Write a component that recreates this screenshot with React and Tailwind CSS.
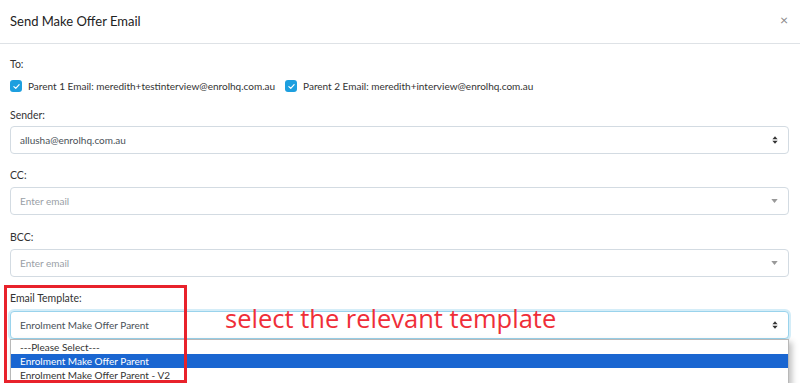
import React from 'react';

const font = "font-['Lato',sans-serif]";

const CheckIcon = () => (
  <span className="flex h-[12px] w-[12px] items-center justify-center rounded-[3px] bg-[#1d9fdf]">
    <svg viewBox="0 0 12 12" className="h-[9px] w-[9px]" fill="none">
      <path d="M2.5 6.2 L5 8.5 L9.5 3.5" stroke="#fff" strokeWidth="1.6" strokeLinecap="round" strokeLinejoin="round" />
    </svg>
  </span>
);

const UpDown = () => (
  <svg viewBox="0 0 8 12" className="h-[10px] w-[6px]" fill="#333">
    <path d="M4 1 L7.5 5 L0.5 5 Z" />
    <path d="M4 11 L7.5 7 L0.5 7 Z" />
  </svg>
);

const Caret = () => (
  <svg viewBox="0 0 8 5" className="h-[4px] w-[7px]" fill="#999">
    <path d="M0 0 L8 0 L4 5 Z" />
  </svg>
);

const Label = ({ children, className = '' }) => (
  <div className={`h-[12px] text-[10.5px] leading-[12px] text-[#333] ${className}`}>{children}</div>
);

const Field = ({ text, placeholder, icon, focused }) => (
  <div
    className={`flex h-[28px] items-center justify-between rounded-[4px] border bg-white pl-[9px] pr-[10px] text-[10px] ${
      focused ? 'border-[#9ad3ec] shadow-[0_0_0_2px_rgba(160,215,240,0.45)]' : 'border-[#d3dbe2]'
    }`}
  >
    <span className={placeholder ? 'text-[#9aa0a6]' : 'text-[#495057]'}>{text}</span>
    {icon}
  </div>
);

export default function App() {
  return (
    <div className={`relative h-[383px] w-[800px] overflow-hidden bg-white ${font}`}>
      {/* Header */}
      <div className="flex h-[44px] items-center justify-between border-b border-[#dee2e6] pl-[10px] pr-[12px]">
        <h1 className="text-[13px] font-normal text-[#222]">Send Make Offer Email</h1>
        <span className="mt-[-4px] text-[14px] leading-none text-[#888]">×</span>
      </div>

      {/* Body */}
      <div className="px-[10px] pr-[11px]">
        <Label className="mt-[14px]">To:</Label>
        <div className="mt-[10px] flex h-[12px] items-center gap-[10px] text-[10px] text-[#333]">
          <label className="flex items-center gap-[6px]">
            <CheckIcon />
            <span>Parent 1 Email: meredith+testinterview@enrolhq.com.au</span>
          </label>
          <label className="flex items-center gap-[6px]">
            <CheckIcon />
            <span>Parent 2 Email: meredith+interview@enrolhq.com.au</span>
          </label>
        </div>

        <Label className="mt-[17px]">Sender:</Label>
        <div className="mt-[5px]">
          <Field text="allusha@enrolhq.com.au" icon={<UpDown />} />
        </div>

        <Label className="mt-[15px]">CC:</Label>
        <div className="mt-[6px]">
          <Field text="Enter email" placeholder icon={<Caret />} />
        </div>

        <Label className="mt-[16px]">BCC:</Label>
        <div className="mt-[6px]">
          <Field text="Enter email" placeholder icon={<Caret />} />
        </div>

        <Label className="mt-[15px]">Email Template:</Label>
        <div className="mt-[7px]">
          <Field text="Enrolment Make Offer Parent" icon={<UpDown />} focused />
        </div>
      </div>

      {/* Open dropdown list */}
      <div className="absolute left-[10px] top-[339px] w-[779px] border border-[#b8b8b8] bg-white text-[10px] leading-[14px] text-[#333] shadow-[3px_3px_6px_rgba(0,0,0,0.25)]">
        <div className="pl-[9px]">---Please Select---</div>
        <div className="bg-[#1a66d1] pl-[9px] text-white">Enrolment Make Offer Parent</div>
        <div className="pl-[9px]">Enrolment Make Offer Parent - V2</div>
        <div className="h-[20px]" />
      </div>

      {/* Annotation */}
      <div className="absolute left-[4px] top-[285px] h-[98px] w-[183px] border-[3px] border-[#e8222b]" />
      <div className="absolute left-[225px] top-[302px] font-['Open_Sans',sans-serif] text-[25.5px] leading-[32px] text-[#ef2e38]">
        select the relevant template
      </div>
    </div>
  );
}
